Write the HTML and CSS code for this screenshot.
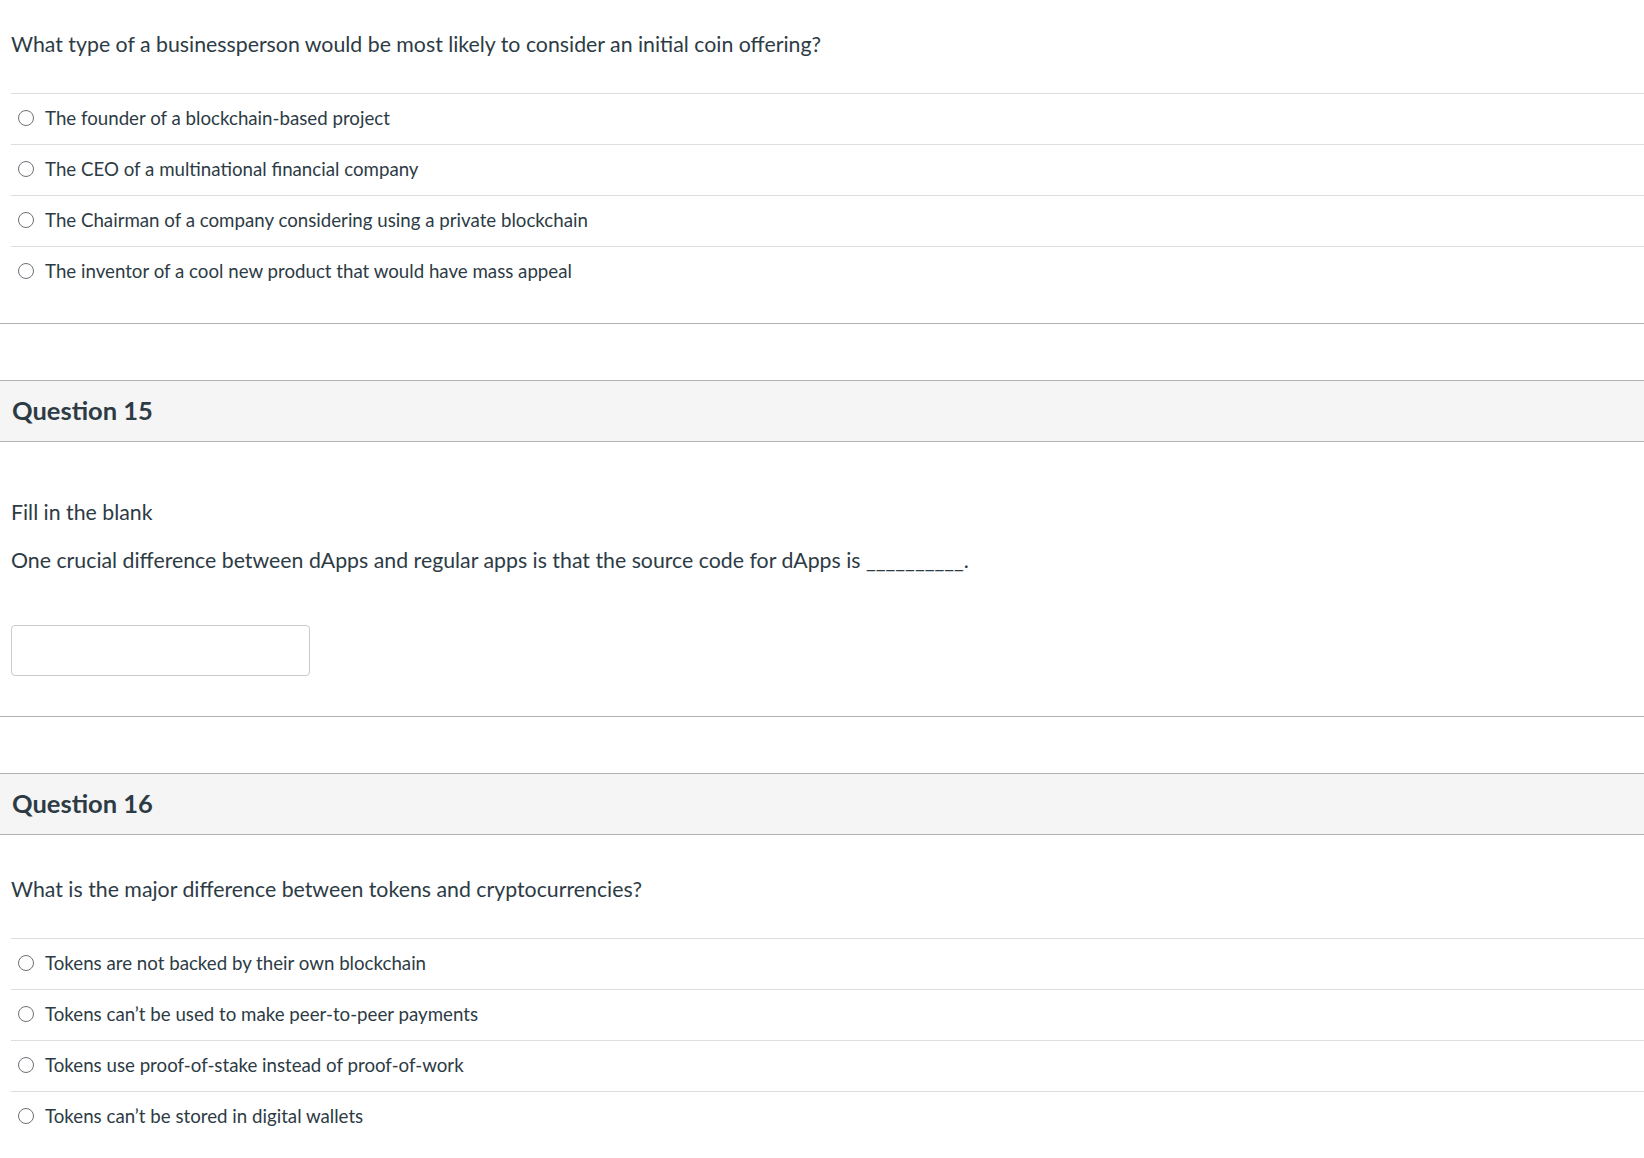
FILE: index.html
```html
<!DOCTYPE html>
<html lang="en">
<head>
<meta charset="utf-8">
<title>Quiz</title>
<link rel="stylesheet" href="styles.css">
</head>
<body>
<div class="quiz">
  <section class="question q-first">
    <div class="q-body">
      <p class="q-text">What type of a businessperson would be most likely to consider an initial coin offering?</p>
      <ul class="answers">
        <li class="answer"><span class="radio"></span><span class="answer-label">The founder of a blockchain-based project</span></li>
        <li class="answer"><span class="radio"></span><span class="answer-label">The CEO of a multinational financial company</span></li>
        <li class="answer"><span class="radio"></span><span class="answer-label">The Chairman of a company considering using a private blockchain</span></li>
        <li class="answer"><span class="radio"></span><span class="answer-label">The inventor of a cool new product that would have mass appeal</span></li>
      </ul>
    </div>
  </section>

  <section class="question">
    <header class="q-header"><h2 class="q-title">Question 15</h2></header>
    <div class="q-body q-fill">
      <p class="q-text q-intro">Fill in the blank</p>
      <p class="q-text q-sentence">One crucial difference between dApps and regular apps is that the source code for dApps is __________.</p>
      <div class="blank-input"></div>
    </div>
  </section>

  <section class="question">
    <header class="q-header"><h2 class="q-title">Question 16</h2></header>
    <div class="q-body q-last">
      <p class="q-text">What is the major difference between tokens and cryptocurrencies?</p>
      <ul class="answers answers-last">
        <li class="answer"><span class="radio"></span><span class="answer-label">Tokens are not backed by their own blockchain</span></li>
        <li class="answer"><span class="radio"></span><span class="answer-label">Tokens can’t be used to make peer-to-peer payments</span></li>
        <li class="answer"><span class="radio"></span><span class="answer-label">Tokens use proof-of-stake instead of proof-of-work</span></li>
        <li class="answer"><span class="radio"></span><span class="answer-label">Tokens can’t be stored in digital wallets</span></li>
      </ul>
    </div>
  </section>
</div>
</body>
</html>
```

FILE: styles.css
```css
html, body {
  margin: 0;
  padding: 0;
  background: #ffffff;
}

body {
  font-family: Lato, "Noto Sans", sans-serif;
  color: #2d3b45;
}

.quiz {
  display: flex;
  flex-direction: column;
  gap: 56px;
}

.question {
  border-bottom: 1px solid #aeb3b6;
}

.q-header {
  box-sizing: border-box;
  background: #f5f5f5;
  border-top: 1px solid #aeb3b6;
  border-bottom: 1px solid #aeb3b6;
  height: 62px;
  display: flex;
  align-items: center;
  padding: 0 12px;
}

.q-title {
  margin: 0;
  font-size: 25.5px;
  font-weight: 700;
  line-height: 1;
}

.q-body {
  padding: 30px 0 26px 11px;
}

.q-last {
  padding-top: 40px;
  padding-bottom: 20px;
}

.q-text {
  margin: 0;
  font-size: 21.3px;
  line-height: 28px;
}

.answers {
  list-style: none;
  margin: 35px 0 0;
  padding: 0;
}

.answers-last {
  margin-top: 35px;
}

.answer {
  box-sizing: border-box;
  display: flex;
  align-items: center;
  gap: 11px;
  height: 51px;
  border-top: 1px solid #dcdfe1;
  padding: 0 0 3px 7px;
  font-size: 18.7px;
}

.radio {
  width: 16px;
  height: 16px;
  border: 1px solid #6b7176;
  border-radius: 50%;
  background: #fff;
  flex: none;
  box-sizing: border-box;
}

.q-fill {
  padding-top: 56px;
  padding-bottom: 40px;
}

.q-sentence {
  margin-top: 20px;
}

.blank-input {
  margin-top: 51px;
  width: 299px;
  height: 51px;
  box-sizing: border-box;
  border: 1px solid #c7cbce;
  border-radius: 4px;
  background: #fff;
}
```
